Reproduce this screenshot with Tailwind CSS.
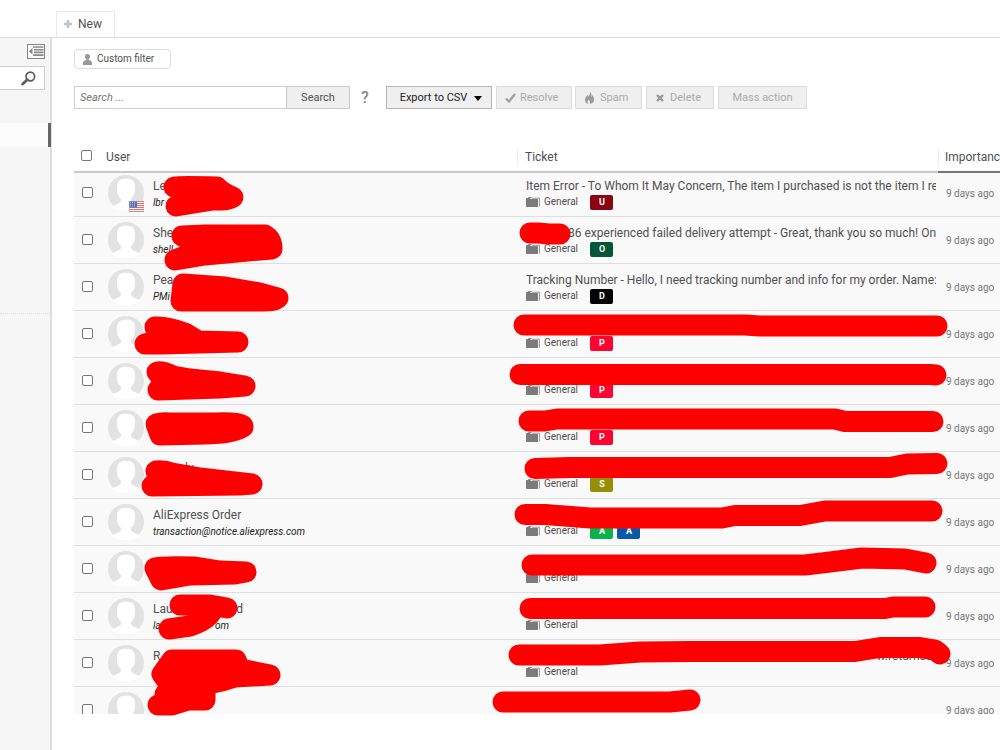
<!DOCTYPE html>
<html lang="en">
<head>
<meta charset="utf-8">
<meta name="viewport" content="width=device-width, initial-scale=1">
<title>Tickets</title>
<script src="https://cdn.jsdelivr.net/npm/@tailwindcss/browser@4"></script>
</head>
<body class="bg-white font-[Roboto,sans-serif] text-xs text-[#505050]">
<svg class="hidden">
  <symbol id="avatar" viewBox="0 0 36 36">
    <circle cx="18" cy="18" r="18" fill="#e2e2e2"/>
    <path fill="#fff" d="M18 3.800C12 3.800 9 6 9 12c0 6 .6 9 4 12 .4 2.500-.5 3.600-2.800 4.600L3.500 31.800C7.500 35 12.500 36.300 18 36.300S28.500 35 32.500 31.800L25.800 28.600C23.500 27.600 22.600 26.500 23 24c3.400-3 4-6 4-12 0-6-3-8.200-9-8.200z"/>
  </symbol>
  <symbol id="folder" viewBox="0 0 14 10">
    <path fill="#7b7b7b" d="M0 1.800Q0 1 .8 1H4l1 1h6.400q.6 0 .6.600V9.200q0 .8-.8.8H.8Q0 10 0 9.200z"/>
    <path fill="none" stroke="#8a8a8a" stroke-width=".9" d="M2 .5H5.500l.8.700H13.400V9.500"/>
  </symbol>
  <symbol id="flag" viewBox="0 0 15 11">
    <path fill="#fff" d="M0 0h15v11H0z"/>
    <path stroke="#e8675f" stroke-width="1" d="M0 .5h15M0 2.500h15M0 4.500h15M0 6.500h15M0 8.500h15M0 10.500h15"/>
    <path fill="#4a76c4" d="M0 0h8v6.500H0z"/>
    <path stroke="#c6d2ef" stroke-width=".8" stroke-dasharray="1 1" d="M1 1.500h6M1 3.300h6M1 5h6"/>
    <path fill="none" stroke="#b9a7a7" stroke-width=".6" d="M.3.3h14.400v10.400H.3z"/>
  </symbol>
</svg>

<div class="relative flex h-screen flex-col overflow-hidden">
  <header class="flex h-[38px] shrink-0 items-end border-b border-[#dadada] pl-14">
    <button class="flex h-[26px] w-[59px] items-center gap-1.5 border border-b-0 border-[#e9e9e9] pb-0.5 pl-[7px]">
      <svg class="size-2" viewBox="0 0 8 8"><path d="M4 0v8M0 4h8" stroke="#c2c2c2" stroke-width="2.600"/></svg>New
    </button>
  </header>

  <div class="flex min-h-0 flex-1">
    <aside class="w-[52px] shrink-0 border-r-2 border-[#dedede] bg-[#f6f6f6]">
      <div class="flex h-7 justify-end pt-1.5 pr-[5px]">
        <button aria-label="Collapse menu" class="h-[15px] w-[18px]">
          <svg class="size-full" viewBox="0 0 18 15"><rect x=".5" y=".5" width="17" height="14" fill="#fafafa" stroke="#858585"/><path d="M6 3h10.500M7 5.700h9.500M7 8.400h9.500M6 11.100h10.500" stroke="#8a8a8a" stroke-width="1.600"/><path d="M5.500 4v6.500L2 7.200z" fill="#858585"/></svg>
        </button>
      </div>
      <div class="mr-[5px] flex h-6 items-center justify-end border border-l-0 border-[#cfcfcf] bg-white pr-2">
        <button aria-label="Search menu">
          <svg class="block size-[15px]" viewBox="0 0 15 15"><circle cx="9.300" cy="5.500" r="4.300" fill="none" stroke="#5d5d5d" stroke-width="1.700"/><path d="M6.300 8.700 1.700 13" stroke="#5d5d5d" stroke-width="2.800" stroke-linecap="round"/></svg>
        </button>
      </div>
      <div class="-mr-px mt-[33px] h-6 border-r-[3px] border-[#666] bg-[#fcfcfc]"></div>
      <div class="mt-[166px] border-t border-dotted border-[#dedede]"></div>
    </aside>

    <main class="flex min-w-0 flex-1 flex-col overflow-hidden pt-[11px] pb-9 pl-[22px]">
      <button class="flex h-5 w-[97px] shrink-0 items-center gap-[5px] rounded border border-[#dcdcdc] pl-2 text-[10px]">
        <svg class="h-[11px] w-[9px]" viewBox="0 0 9 11"><circle cx="4.500" cy="2.600" r="2.600" fill="#999"/><path d="M3.300 4.500h2.400v1.500C8 6.600 9 7.500 9 9v2H0V9c0-1.500 1-2.400 3.300-3z" fill="#999"/></svg>Custom filter
      </button>

      <div class="mt-[17px] flex h-[23px] shrink-0">
        <input type="text" aria-label="Search" placeholder="Search ..." class="w-[213px] border border-[#cecece] px-[5px] pt-0.5 text-[11px] placeholder:text-[#777] placeholder:italic">
        <button class="-ml-px w-16 border border-[#c8c8c8] bg-[#efefef] pt-0.5 text-[11px]">Search</button>
        <button aria-label="Help" class="ml-1.5 w-[18px] text-base font-medium text-[#8a8a8a]">?</button>
        <button class="ml-3 flex w-[106px] items-center justify-center gap-[7px] border border-[#b4b4b4] bg-[#efefef] pt-0.5 pl-1 text-[11px] text-[#222]">Export to CSV<svg class="h-[5px] w-2" viewBox="0 0 8 5"><path d="M0 0h8L4 5z" fill="#000"/></svg></button>
        <button disabled class="ml-1 flex w-[76px] items-center gap-1 border border-[#dcdcdc] bg-[#efefef] pt-0.5 pl-2 text-[11px] text-[#aaa]"><svg class="mb-px h-2.5 w-[11px]" viewBox="0 0 11 10"><path d="m1 5.500 3 3L10 1" fill="none" stroke="#a2a2a2" stroke-width="2.400"/></svg>Resolve</button>
        <button disabled class="ml-[3px] flex w-[67px] items-center gap-1.5 border border-[#dcdcdc] bg-[#efefef] pt-0.5 pl-[9px] text-[11px] text-[#aaa]"><svg class="mb-px h-3 w-[9px]" viewBox="0 0 9 12"><path d="M5 0c.4 2-.6 3-1.500 4.500-.5-.4-.6-1-.5-1.700C1 4.500 0 6 0 8c0 2 1.300 3.500 3 4-1-1.700-.3-3 1-4.500 0 1.500 1.800 2.500 1 4.500 2.500-.6 4-2.200 4-4.500C9 5.500 8.200 4 7.300 3c0 1-.2 1.600-.8 2C6.800 3 6.500 1.200 5 0z" fill="#9b9b9b"/></svg>Spam</button>
        <button disabled class="ml-1 flex w-[68px] items-center gap-1.5 border border-[#dcdcdc] bg-[#efefef] pt-0.5 pl-[9px] text-[11px] text-[#aaa]"><svg class="mb-0.5 size-2" viewBox="0 0 8 8"><path d="m1 1 6 6M7 1 1 7" stroke="#979797" stroke-width="2.400"/></svg>Delete</button>
        <button disabled class="ml-1 w-[89px] border border-[#dcdcdc] bg-[#efefef] pt-0.5 text-[11px] text-[#aaa]">Mass action</button>
      </div>

      <div class="mt-8 min-h-0 flex-1 overflow-hidden">
        <table class="w-full table-fixed border-separate border-spacing-0">
          <colgroup><col class="w-8"><col><col class="w-[421px]"><col class="w-[62px]"></colgroup>
          <thead>
            <tr class="h-[29px] text-left">
              <th class="relative p-0 pl-[7px] after:absolute after:inset-x-0 after:top-[30px] after:h-[2px] after:bg-[#c9c9c9]"><input type="checkbox" aria-label="Select all" class="block size-[11px] appearance-none rounded-xs border border-[#777] bg-white"></th>
              <th class="relative p-0 pt-0.5 font-normal after:absolute after:inset-x-0 after:top-[30px] after:h-[2px] after:bg-[#c9c9c9]">User</th>
              <th class="relative p-0 pt-0.5 font-normal after:absolute after:inset-x-0 after:top-[30px] after:h-[2px] after:bg-[#c9c9c9]"><div class="border-l border-[#ececec] pl-[7px]">Ticket</div></th>
              <th class="relative p-0 pt-0.5 font-normal after:absolute after:inset-x-0 after:top-[30px] after:h-[2px] after:bg-[#777]"><div class="overflow-hidden border-l border-[#ececec] pl-1.5 whitespace-nowrap">Importance</div></th>
            </tr>
          </thead>
          <tbody id="rows"></tbody>
        </table>
      </div>
    </main>
  </div>

  <!-- Marker strokes over private details -->
  <svg class="pointer-events-none absolute inset-0 size-full" fill="none" stroke="#f00" stroke-width="21" stroke-linecap="round" stroke-linejoin="round" aria-hidden="true">
    <g fill="#f00">
      <path d="M174 187Q180 186 217 187Q222 193 233 197Q232 200 213 200L176 206"/>
      <path d="M182 236L205 235H265Q272 239 272 249L248 251L205 255L175 260L205 248Z"/>
      <path d="M183 284L225 287L260 293L278 298Q276 301 265 301H181Z"/>
      <path d="M155 327Q166 326 185 333L198 341L238 342L160 344H145L165 338Z"/>
      <path d="M157 372Q163 371 173 376L190 379L220 382L245 386L220 388L158 390L165 381Z"/>
      <path d="M156 424Q162 422 170 423H215Q243 422 243 427Q232 434 205 434L160 435Z"/>
      <path d="M156 471Q164 470 172 473L200 478L252 484L240 485L152 486L160 478Z"/>
      <path d="M155 568Q160 566 195 567L220 571L246 572L235 574L190 575L161 580Z"/>
      <path d="M172 660H236L240 669L255 672L270 675L235 677L222 681L174 691L162 674Z"/>
    </g>
    <path d="M180 605H210L227 608M212 611Q208 620 190 626L169 629"/>
    <path d="M165 694L180 686M158 705H172L188 700H205V690"/>
    <path d="M530 233H538L549 234H560"/>
    <path d="M524 325H745L760 326H937"/>
    <path d="M520 374.500H930L936 375"/>
    <path d="M529 421H545L557 419H835L845 421.500H933"/>
    <path d="M535 468.500L570 467.500H890L907 464L937 463.500"/>
    <path d="M525 514.500H545L590 518H722L735 515.500H800L825 511H932"/>
    <path d="M532 565H805L830 562L862 558L905 559L926 563"/>
    <path d="M530 608.500H885L893 607H925"/>
    <path d="M519 655H600L640 652L690 651.500H855L880 647.500H920L935 650L940 654"/>
    <path d="M503 702H670L690 700"/>
  </svg>
</div>

<script>
const badge = (letter, colour) => `<span class="flex h-[15px] w-[23px] items-center justify-center rounded-xs pl-px text-[9px] font-bold text-white ${colour}">${letter}</span>`;
const P = badge('P', 'bg-[#fb0431]');
const rows = [
  {name: 'Le', mail: 'lbr', flag: true, title: 'Item Error - To Whom It May Concern, The item I purchased is not the item I received', tags: badge('U', 'bg-[#8b0510]')},
  {name: 'She', mail: 'shell', title: '<span class="pl-[42px]">86 experienced failed delivery attempt - Great, thank you so much! On</span>', tags: badge('O', 'bg-[#045637]')},
  {name: 'Pea', mail: 'PMi', title: 'Tracking Number - Hello, I need tracking number and info for my order. Name:', tags: badge('D', 'bg-black')},
  {tags: P}, {tags: P}, {tags: P},
  {name: '<span class="pl-8">ly</span>', tags: badge('S', 'bg-[#968f05]')},
  {name: 'AliExpress Order', mail: 'transaction@notice.aliexpress.com', tags: badge('A', 'bg-[#08b34f]') + badge('A', 'bg-[#0659ac]')},
  {},
  {name: '<span class="flex w-[90px] justify-between"><span>Lau</span><span>d</span></span>', mail: '<span class="flex w-[76px] justify-between"><span>la</span><span>om</span></span>'},
  {name: 'R', title: '<span class="block pr-1 text-right">w.returnsc</span>'},
  {},
];
document.getElementById('rows').innerHTML = rows.map((r, i) => `
  <tr class="h-[47px] bg-[#f9f9f9]">
    <td class="border-b border-[#dedede] p-0 pb-0.5 pl-2"><input type="checkbox" aria-label="Select ticket ${i + 1}" class="block size-[11px] appearance-none rounded-xs border border-[#777] bg-white"></td>
    <td class="border-b border-[#dedede] p-0">
      <div class="flex items-center gap-[9px] pl-0.5">
        <div class="relative size-9 shrink-0"><svg class="size-full"><use href="#avatar"/></svg>${r.flag ? '<svg class="absolute right-0 -bottom-px h-[11px] w-[15px]"><use href="#flag"/></svg>' : ''}</div>
        <div class="min-w-0 pt-[3px] whitespace-nowrap"><div class="h-4 leading-4">${r.name || ''}</div><div class="h-[17px] text-[10px] leading-[18px] text-[#222] italic">${r.mail || ''}</div></div>
      </div>
    </td>
    <td class="border-b border-[#dedede] p-0">
      <div class="mr-0.5 ml-[9px] pt-0.5">
        <div class="h-4 overflow-hidden leading-4 whitespace-nowrap">${r.title || ''}</div>
        <div class="flex h-4 items-center text-[10px]"><svg class="mr-1 h-2.5 w-3.5"><use href="#folder"/></svg><span class="w-[46px]">General</span><span class="flex gap-1">${r.tags || ''}</span></div>
      </div>
    </td>
    <td class="border-b border-[#dedede] p-0 pt-0.5 pl-2 text-[10px] whitespace-nowrap text-[#777]">9 days ago</td>
  </tr>`).join('');
</script>
</body>
</html>
